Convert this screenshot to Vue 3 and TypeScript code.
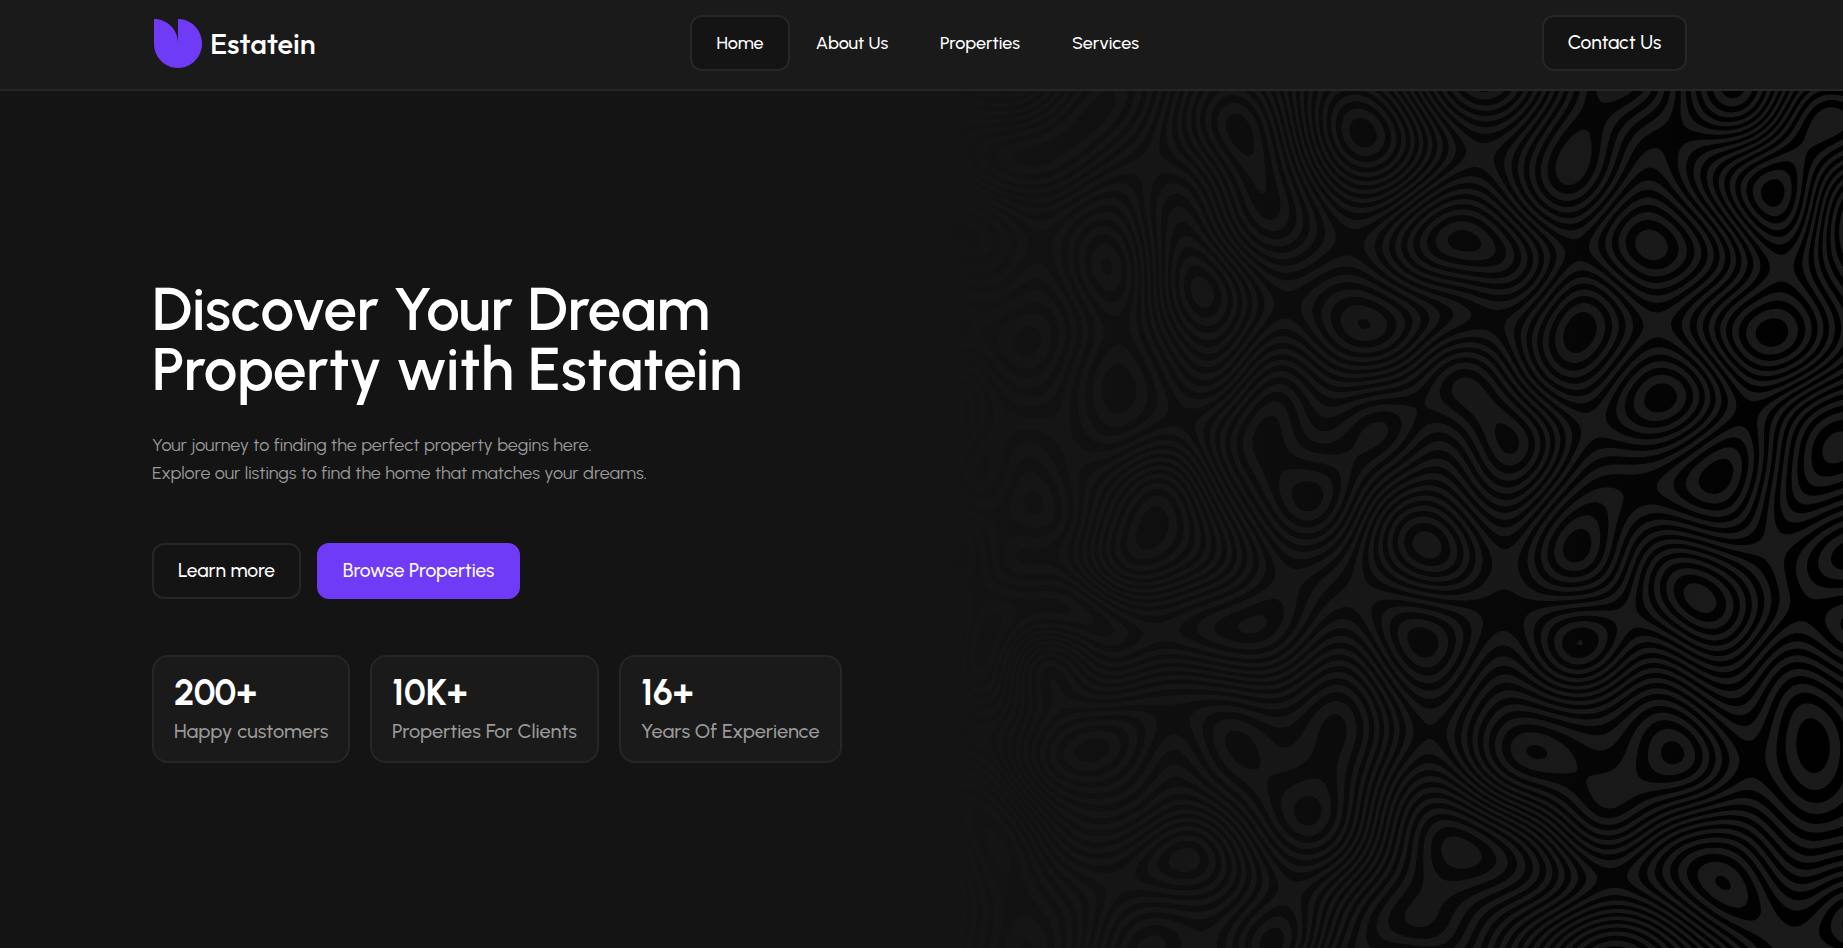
<script setup lang="ts">
type Node = [x: number, y: number, value: number, sloped?: 1]

interface Stat {
  value: string
  label: string
  cls: string
}

const links = [
  { label: 'Home', cls: 'home active' },
  { label: 'About Us', cls: 'about' },
  { label: 'Properties', cls: 'props' },
  { label: 'Services', cls: 'serv' },
]

const stats: Stat[] = [
  { value: '200+', label: 'Happy customers', cls: 's1' },
  { value: '10K+', label: 'Properties For Clients', cls: 's2' },
  { value: '16+', label: 'Years Of Experience', cls: 's3' },
]

// Peaks, pits and saddles of the height map behind the contour backdrop.
// Whole numbers fall on a light band, halves on a dark one.
const nodes: Node[] = [
  [1480, 155, 0], [1464, 241, 5.5], [1484, 80, 4.6], [1363, 133, -8.6], [1573, 163, -5.1],
  [1577, 250, -0.5], [1580, 332, -4.7], [1651, 245, 3.1], [1657, 325, -1], [1661, 398, 2.6],
  [1772, 333, -7.6], [1593, 425, 0], [1508, 440, 5.5], [1747, 413, -2.5], [1717, 477, -4.6],
  [1838, 447, 4.0], [1782, 268, -5], [1773, 193, -8.6], [1862, 228, 1], [1828, 123, -7.2],
  [1805, 147, -6.8], [1673, 135, -1.5], [1617, 78, -5.6], [1595, 113, -4.5], [1733, 84, 2.6],
  [1490, 320, 0.5], [1364, 324, -4.3], [1420, 408, 3.5], [1308, 497, 6.55], [1267, 442, 5.55],
  [1376, 433, 4.95], [1427, 545, -5.1], [1505, 567, -1], [1577, 547, -4.6], [1505, 612, -0.5],
  [1423, 642, 2.6], [1580, 643, 2.78], [1536, 752, -7.3], [1627, 618, 1], [1700, 598, 5.1],
  [1773, 547, 0], [1807, 610, -0.6], [1850, 555, -2.6], [1855, 625, 0.5], [1813, 745, -6.6],
  [1752, 760, -4.5], [1673, 753, -8.45], [1613, 792, -7.2], [1583, 775, -6.6], [1430, 732, -1.3],
  [1460, 852, 6.1], [1422, 912, 4.95], [1333, 735, -7.5], [1240, 747, -7.5], [1308, 812, -8.5],
  [1287, 583, 2], [1253, 625, 2.85], [1360, 595, 0], [1160, 632, 1], [1153, 528, -7.6],
  [1173, 718, -5.5], [1092, 750, -8.6], [1185, 860, 3.1], [1120, 882, 1], [1290, 893, -4],
  [1272, 943, -5.6], [1150, 950, -3], [1015, 895, 5.5], [998, 850, 6], [978, 735, 0],
  [1040, 605, 4.6], [985, 643, 4.6], [1067, 445, 0], [1118, 388, 2.6], [1027, 342, -3.5],
  [1117, 330, 1.5], [1107, 267, 3.35], [1202, 292, -7.1], [1240, 132, 4.6], [1040, 155, -6.5],
  [1095, 115, -6.5], [1150, 165, -2], [1287, 305, -1.5], [1350, 242, -0.5], [1183, 418, 0.5],
  [965, 235, 2.5], [1040, 245, -0.5], [1033, 500, 2], [953, 550, 5], [1040, 560, 0],
  [1612, 878, -1.5], [1615, 965, -9], [1723, 883, 3.3], [1785, 940, 2], [1855, 925, 3.6],
  [945, 425, 4], [1000, 430, 0], [1360, 960, 3],
  [1080, 697, -4.3, 1], [1092, 668, -1.3, 1], [1027, 750, -4.2, 1], [1020, 690, -1.5, 1],
  [1100, 528, -3.5, 1], [1215, 528, -3, 1], [1150, 470, -4.2, 1], [1215, 585, -1, 1],
  [1478, 403, 5, 1], [1290, 460, 5.5, 1], [1340, 456, 4.95, 1], [1612, 500, -3, 1],
  [1650, 482, -2.6, 1], [1130, 800, -4.5, 1], [1060, 820, -2, 1], [1068, 135, -6.5, 1],
  [1060, 395, -0.5, 1], [1195, 245, -5, 1], [1188, 212, -3.8, 1], [1182, 490, -5, 1],
  [1745, 915, 2.5, 1], [1795, 918, 1.5, 1], [1822, 938, 2.1, 1], [1358, 446, 5, 1],
]

const SIGMA = 58
const RIDGE = 3e-4
const STEP = 4
const LEFT = 925
const TOP = 80
const COLS = 235
const ROWS = 222

// Hermite interpolation: a node fixes the height and, unless sloped, a flat slope.
function solveField(pts: Node[]): Float64Array {
  const n = pts.length * 3
  const m: Float64Array[] = []
  pts.forEach(([xi, yi, v, sloped], i) => {
    const r0 = new Float64Array(n + 1)
    const r1 = new Float64Array(n + 1)
    const r2 = new Float64Array(n + 1)
    pts.forEach(([xj, yj, , slopedJ], j) => {
      const dx = (xi - xj) / SIGMA
      const dy = (yi - yj) / SIGMA
      const e = Math.exp(-(dx * dx + dy * dy) / 2)
      const g = slopedJ ? 0 : e
      r0[j * 3] = e
      r0[j * 3 + 1] = dx * g
      r0[j * 3 + 2] = dy * g
      if (sloped) return
      r1[j * 3] = -dx * e
      r1[j * 3 + 1] = (1 - dx * dx) * g
      r1[j * 3 + 2] = -dx * dy * g
      r2[j * 3] = -dy * e
      r2[j * 3 + 1] = -dx * dy * g
      r2[j * 3 + 2] = (1 - dy * dy) * g
    })
    if (sloped) {
      r1[i * 3 + 1] = 1
      r2[i * 3 + 2] = 1
    }
    r0[n] = v + 1
    m.push(r0, r1, r2)
  })
  for (let i = 0; i < n; i++) m[i][i] += RIDGE
  for (let c = 0; c < n; c++) {
    let p = c
    for (let r = c + 1; r < n; r++) if (Math.abs(m[r][c]) > Math.abs(m[p][c])) p = r
    const swap = m[c]
    m[c] = m[p]
    m[p] = swap
    for (let r = c + 1; r < n; r++) {
      const f = m[r][c] / m[c][c]
      if (f !== 0) for (let k = c; k <= n; k++) m[r][k] -= f * m[c][k]
    }
  }
  const w = new Float64Array(n)
  for (let r = n - 1; r >= 0; r--) {
    let s = m[r][n]
    for (let k = r + 1; k < n; k++) s -= m[r][k] * w[k]
    w[r] = s / m[r][r]
  }
  return w
}

function sampleField(): Float64Array {
  const w = solveField(nodes)
  const grid = new Float64Array(COLS * ROWS).fill(-60)
  for (let r = 1; r < ROWS - 1; r++) {
    for (let c = 1; c < COLS - 1; c++) {
      const x = LEFT + c * STEP
      const y = TOP + r * STEP
      let s = -1
      for (let j = 0; j < nodes.length; j++) {
        const dx = (x - nodes[j][0]) / SIGMA
        const dy = (y - nodes[j][1]) / SIGMA
        const d = dx * dx + dy * dy
        if (d < 40) s += Math.exp(-d / 2) * (w[j * 3] + dx * w[j * 3 + 1] + dy * w[j * 3 + 2])
      }
      grid[r * COLS + c] = s
    }
  }
  return grid
}

// Closed outlines of {height > level}; the even-odd fill of all of them gives the bands.
function outline(grid: Float64Array, level: number): string {
  const next = new Map<number, number[]>()
  const point = (edge: number): string => {
    const i = edge >> 1
    const j = edge & 1 ? i + COLS : i + 1
    const t = (level - grid[i]) / (grid[j] - grid[i])
    const c = i % COLS
    const r = (i - c) / COLS
    const x = LEFT + (c + (edge & 1 ? 0 : t)) * STEP
    const y = TOP + (r + (edge & 1 ? t : 0)) * STEP
    return `${x.toFixed(1)} ${y.toFixed(1)}`
  }
  for (let r = 0; r < ROWS - 1; r++) {
    for (let c = 0; c < COLS - 1; c++) {
      const i = r * COLS + c
      const a = grid[i] > level
      const b = grid[i + 1] > level
      const d = grid[i + COLS + 1] > level
      const e = grid[i + COLS] > level
      if (a === b && b === d && d === e) continue
      const around: [boolean, boolean, number][] = [
        [a, b, i * 2],
        [b, d, (i + 1) * 2 + 1],
        [d, e, (i + COLS) * 2],
        [e, a, i * 2 + 1],
      ]
      for (let k = 0; k < 4; k++) {
        if (!around[k][0] || around[k][1]) continue
        for (let s = 1; s < 4; s++) {
          const to = around[(k + s) % 4]
          if (!to[0] && to[1]) {
            next.set(around[k][2], [...(next.get(around[k][2]) ?? []), to[2]])
            break
          }
        }
      }
    }
  }
  let d = ''
  while (next.size) {
    const start = next.keys().next().value as number
    const loop: string[] = []
    let at: number | undefined = start
    while (at !== undefined) {
      const out = next.get(at)
      if (!out) break
      loop.push(point(at))
      const to: number = out.pop() as number
      if (!out.length) next.delete(at)
      at = to === start ? undefined : to
    }
    d += `M${loop.join('L')}Z`
  }
  return d
}

const grid = sampleField()
let bands = ''
for (let n = -14; n <= 12; n++) bands += outline(grid, n - 0.25) + outline(grid, n + 0.25)
</script>

<template>
  <div class="page">
    <header class="bar">
      <div class="logo">
        <svg width="48" height="49" viewBox="0 0 48 49">
          <path d="M0 0C13.300 0 24 10.700 24 24V0C37.300 0 48 11 48 24.500S37.300 49 24 49 0 38 0 24.500Z" fill="#703bf7" />
        </svg>
        <span class="brand">Estatein</span>
      </div>
      <nav class="nav">
        <a v-for="l in links" :key="l.label" class="link" :class="l.cls">{{ l.label }}</a>
      </nav>
      <a class="contact">Contact Us</a>
    </header>

    <main class="hero">
      <svg class="waves" width="923" height="857" viewBox="920 91 923 857">
        <defs>
          <linearGradient id="fade" x1="0" x2="1" y1="0" y2="0">
            <stop offset="0.01" stop-color="#141414" />
            <stop offset="1" stop-color="#141414" stop-opacity="0" />
          </linearGradient>
        </defs>
        <rect x="920" y="91" width="923" height="857" fill="#000" />
        <path :d="bands" fill="#1a1a1a" fill-rule="evenodd" />
        <rect x="920" y="91" width="923" height="857" fill="url(#fade)" />
      </svg>
      <div class="content">
        <h1>Discover Your Dream<br />Property with Estatein</h1>
        <p>
          Your journey to finding the perfect property begins here.<br />
          Explore our listings to find the home that matches your dreams.
        </p>
        <div class="actions">
          <button class="btn learn">Learn more</button>
          <button class="btn browse">Browse Properties</button>
        </div>
        <div class="stats">
          <div v-for="s in stats" :key="s.label" class="stat" :class="s.cls">
            <strong>{{ s.value }}</strong>
            <span>{{ s.label }}</span>
          </div>
        </div>
      </div>
    </main>
  </div>
</template>

<style>
body {
  background: #141414;
}
</style>

<style scoped>
.page {
  height: 948px;
  overflow: hidden;
  display: flex;
  flex-direction: column;
  background: #141414;
  color: #fff;
  font-family: Urbanist, Lato, sans-serif;
}
.page * {
  box-sizing: border-box;
  white-space: nowrap;
}
.bar {
  flex: none;
  height: 91px;
  display: grid;
  grid-template-columns: 536px 1fr 145px;
  align-items: start;
  padding: 15px 156px 0 154px;
  background: #1a1a1a;
  border-bottom: 2px solid #262626;
}
.logo {
  display: flex;
  gap: 8px;
  padding-top: 4px;
}
.brand {
  font-family: Outfit, Urbanist, Lato, sans-serif;
  font-size: 29px;
  line-height: 49px;
  font-weight: 500;
}
.nav {
  display: flex;
}
.link,
.contact {
  height: 56px;
  line-height: 52px;
  font-size: 18px;
  font-weight: 500;
  border: 2px solid transparent;
  border-radius: 12px;
  text-align: center;
}
.active,
.contact {
  background: #141414;
  border-color: #262626;
}
.home {
  width: 100px;
}
.about {
  width: 124px;
}
.props {
  width: 132px;
}
.serv {
  width: 119px;
}
.contact {
  font-size: 19.200px;
  line-height: 51px;
}
.hero {
  position: relative;
  flex: 1;
}
.waves {
  position: absolute;
  right: 0;
  top: 0;
}
.content {
  position: relative;
  width: 900px;
  padding: 188px 0 0 152px;
}
h1 {
  margin: 0;
  font-size: 60px;
  line-height: 60px;
  font-weight: 600;
}
p {
  margin: 32px 0 0;
  font-size: 18px;
  line-height: 28px;
  font-weight: 400;
  color: #999;
}
.actions {
  display: flex;
  gap: 16px;
  margin-top: 56px;
}
.btn {
  height: 56px;
  padding: 0 0 2px;
  border: 2px solid #262626;
  border-radius: 12px;
  background: #141414;
  color: #fff;
  font: 500 19.200px Urbanist, Lato, sans-serif;
}
.learn {
  width: 149px;
}
.browse {
  width: 203px;
  background: #703bf7;
  border-color: #703bf7;
}
.stats {
  display: flex;
  gap: 20px;
  margin-top: 56px;
}
.stat {
  flex: none;
  height: 108px;
  display: flex;
  flex-direction: column;
  padding: 16px 20px 0;
  background: #1a1a1a;
  border: 2px solid #262626;
  border-radius: 16px;
}
.stat strong {
  font-size: 36px;
  line-height: 40px;
  font-weight: 700;
}
.stat span {
  font-size: 20px;
  line-height: 28px;
  margin-top: 4px;
  font-weight: 500;
  color: #999;
}
.s1 {
  width: 198px;
}
.s2 {
  width: 229px;
}
.s3 {
  width: 223px;
}
</style>
